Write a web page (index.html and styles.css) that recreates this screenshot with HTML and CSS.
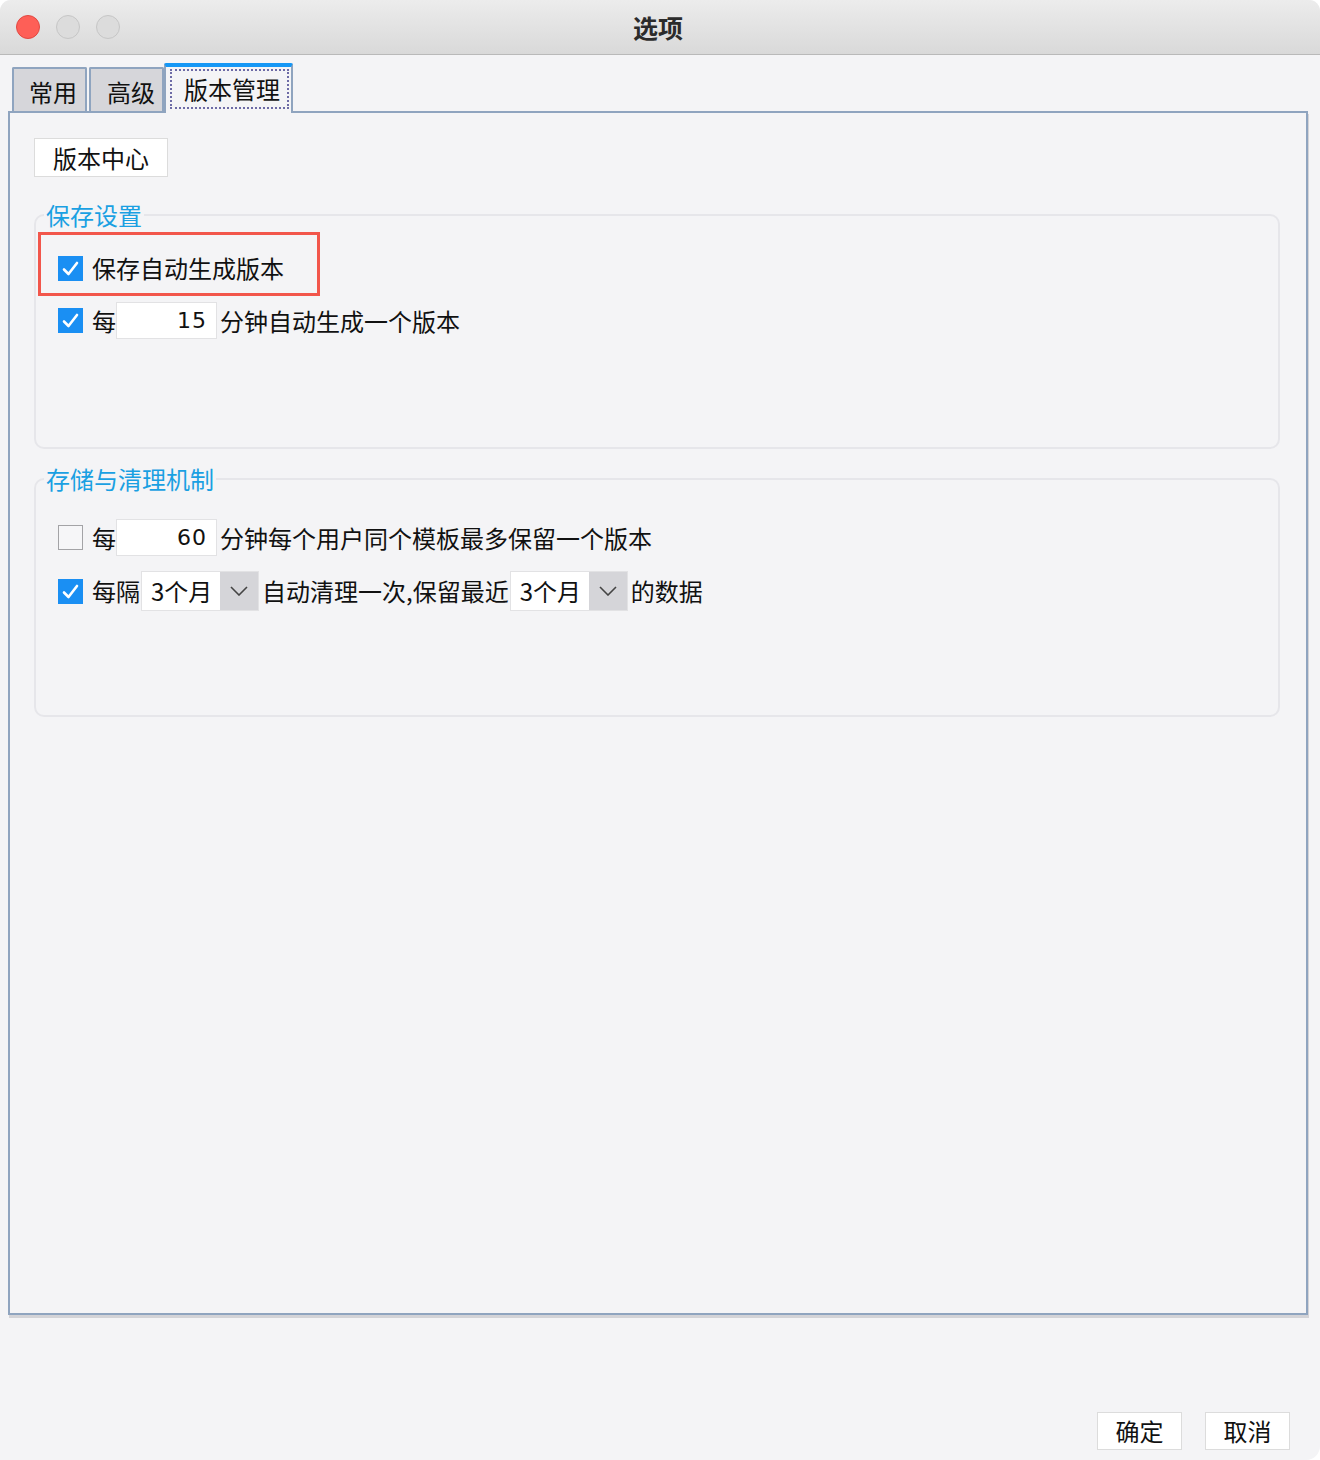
FILE: index.html
```html
<!DOCTYPE html>
<html lang="zh-CN">
<head>
<meta charset="utf-8">
<title>选项</title>
<link rel="stylesheet" href="styles.css">
</head>
<body>
<div class="window">
  <div class="titlebar">
    <div class="lights">
      <span class="light red"></span>
      <span class="light gray"></span>
      <span class="light gray"></span>
    </div>
    <div class="title">选项</div>
  </div>

  <div class="tabs">
    <div class="tab">常用</div>
    <div class="tab tab2">高级</div>
    <div class="tab active"><span class="focus">版本管理</span></div>
  </div>

  <div class="panel">
    <div class="btn center-btn">版本中心</div>

    <fieldset class="group g1">
      <legend>保存设置</legend>
      <div class="group-body body1">
        <div class="row highlight">
          <span class="cb checked"><svg viewBox="0 0 25 25" width="25" height="25"><path d="M6 13.5 L10.5 18 L19 7" fill="none" stroke="#fff" stroke-width="2.6" stroke-linecap="round" stroke-linejoin="round"/></svg></span>
          <span class="label">保存自动生成版本</span>
        </div>
        <div class="row r2">
          <span class="cb checked"><svg viewBox="0 0 25 25" width="25" height="25"><path d="M6 13.5 L10.5 18 L19 7" fill="none" stroke="#fff" stroke-width="2.6" stroke-linecap="round" stroke-linejoin="round"/></svg></span>
          <span class="label">每</span>
          <span class="num">15</span>
          <span class="label after">分钟自动生成一个版本</span>
        </div>
      </div>
    </fieldset>

    <fieldset class="group g2">
      <legend>存储与清理机制</legend>
      <div class="group-body body2">
        <div class="row r3">
          <span class="cb"></span>
          <span class="label">每</span>
          <span class="num">60</span>
          <span class="label after">分钟每个用户同个模板最多保留一个版本</span>
        </div>
        <div class="row r4">
          <span class="cb checked"><svg viewBox="0 0 25 25" width="25" height="25"><path d="M6 13.5 L10.5 18 L19 7" fill="none" stroke="#fff" stroke-width="2.6" stroke-linecap="round" stroke-linejoin="round"/></svg></span>
          <span class="label">每隔</span>
          <span class="select"><span class="sel-val">3个月</span><span class="sel-arrow"><svg viewBox="0 0 18 10" width="18" height="10"><path d="M1 1 L9 9 L17 1" fill="none" stroke="#444" stroke-width="1.6"/></svg></span></span>
          <span class="label after2">自动清理一次,保留最近</span>
          <span class="select"><span class="sel-val">3个月</span><span class="sel-arrow"><svg viewBox="0 0 18 10" width="18" height="10"><path d="M1 1 L9 9 L17 1" fill="none" stroke="#444" stroke-width="1.6"/></svg></span></span>
          <span class="label after2">的数据</span>
        </div>
      </div>
    </fieldset>
  </div>

  <div class="footer">
    <div class="btn foot-btn">确定</div>
    <div class="btn foot-btn">取消</div>
  </div>
</div>
</body>
</html>
```

FILE: styles.css
```css
html, body {
  margin: 0;
  padding: 0;
  background: #ffffff;
}
body {
  font-family: "Noto Sans CJK SC", "Noto Sans", sans-serif;
  color: #111;
  font-size: 24px;
}
.window {
  width: 1320px;
  height: 1460px;
  background: #f4f4f6;
  border-radius: 11px 11px 14px 0;
  overflow: hidden;
  display: flex;
  flex-direction: column;
  box-sizing: border-box;
}
.titlebar {
  height: 54px;
  border-bottom: 1px solid #b9b9b9;
  background: linear-gradient(#ececec, #d9d9d9);
  display: flex;
  align-items: center;
  position: relative;
  flex: none;
}
.lights {
  display: flex;
  gap: 16px;
  padding-left: 16px;
}
.light {
  width: 24px;
  height: 24px;
  border-radius: 50%;
  box-sizing: border-box;
}
.light.red {
  background: #fe5f57;
  border: 1px solid #e14942;
}
.light.gray {
  background: #dcdcdc;
  border: 1px solid #c6c6c6;
}
.title {
  flex: 1;
  text-align: center;
  font-weight: bold;
  font-size: 25px;
  color: #2b2b2b;
  margin-right: 124px;
}

.tabs {
  display: flex;
  align-items: flex-end;
  padding-left: 12px;
  margin-top: 8px;
  height: 48px;
  flex: none;
  position: relative;
  z-index: 2;
}
.tab {
  box-sizing: border-box;
  width: 75px;
  height: 44px;
  border: 2px solid #8fa4bf;
  border-bottom: none;
  border-radius: 2px 2px 0 0;
  background: #d6d6da;
  padding-left: 15px;
  line-height: 46px;
}
.tab2 {
  margin-left: 2px;
  padding-left: 16px;
}
.tab.active {
  width: 129px;
  height: 50px;
  margin-bottom: -2px;
  background: #f4f4f6;
  border-top: 4px solid #1597f5;
  padding: 2px 2px 4px 4px;
  line-height: normal;
}
.focus {
  display: block;
  box-sizing: border-box;
  height: 100%;
  border: 2px dotted #6d6ba6;
  padding-left: 12px;
  line-height: 36px;
}

.panel {
  box-sizing: border-box;
  margin-left: 8px;
  width: 1300px;
  height: 1204px;
  border: 2px solid #8fa4bf;
  box-shadow: 1px 3px 0 #d3d3d7;
  padding: 25px 24px 0 24px;
  flex: none;
  position: relative;
  z-index: 1;
}
.btn {
  box-sizing: border-box;
  background: #ffffff;
  border: 1px solid #dcdcdc;
  text-align: center;
}
.center-btn {
  width: 134px;
  height: 39px;
  line-height: 37px;
}

.group {
  margin: 0;
  padding: 0;
  width: 1246px;
  box-sizing: border-box;
  border: 2px solid #e6e6ea;
  border-radius: 10px;
}
.group legend {
  color: #1aa0e2;
  font-size: 24px;
  line-height: 30px;
  padding: 0 2px;
  margin-left: 8px;
}
.g1 {
  margin-top: 23px;
}
.g2 {
  margin-top: 15px;
}
.group-body {
  display: flex;
  flex-direction: column;
}
.body1 {
  padding: 2px 0 108px 2px;
}
.body2 {
  padding: 25px 0 104px 0;
}
.row {
  display: flex;
  align-items: center;
  white-space: nowrap;
}
.highlight {
  box-sizing: border-box;
  width: 282px;
  height: 64px;
  border: 3px solid #f2564b;
  padding: 8px 0 0 17px;
}
.r2 {
  margin-top: 6px;
  padding-left: 20px;
  height: 37px;
}
.r3 {
  padding-left: 22px;
  height: 37px;
}
.r4 {
  margin-top: 15px;
  padding-left: 22px;
  height: 40px;
}
.cb {
  box-sizing: border-box;
  width: 25px;
  height: 25px;
  flex: none;
  display: block;
}
.cb svg {
  display: block;
}
.cb.checked {
  background: #1a8ff3;
}
.cb:not(.checked) {
  background: #f6f6f8;
  border: 1.5px solid #a3a3a6;
}
.label {
  margin-left: 9px;
  line-height: 30px;
}
.label.after {
  margin-left: 3px;
}
.label.after2 {
  margin-left: 3px;
}
.num {
  box-sizing: border-box;
  width: 101px;
  height: 37px;
  background: #fff;
  border: 1px solid #e2e2e4;
  text-align: right;
  padding-right: 9px;
  line-height: 35px;
  font-family: "DejaVu Sans", "Noto Sans", sans-serif;
  font-size: 22px;
  letter-spacing: 1px;
}
.select {
  display: flex;
  height: 40px;
  box-sizing: border-box;
  border: 1px solid #e2e2e4;
  margin-left: 1px;
}
.sel-val {
  width: 78px;
  background: #fff;
  padding-left: 9px;
  box-sizing: border-box;
  line-height: 38px;
}
.sel-arrow {
  width: 38px;
  background: #d5d5d9;
  display: flex;
  align-items: center;
  justify-content: center;
}

.footer {
  display: flex;
  justify-content: flex-end;
  gap: 23px;
  padding: 97px 30px 0 0;
}
.foot-btn {
  width: 85px;
  height: 38px;
  line-height: 36px;
}
```
